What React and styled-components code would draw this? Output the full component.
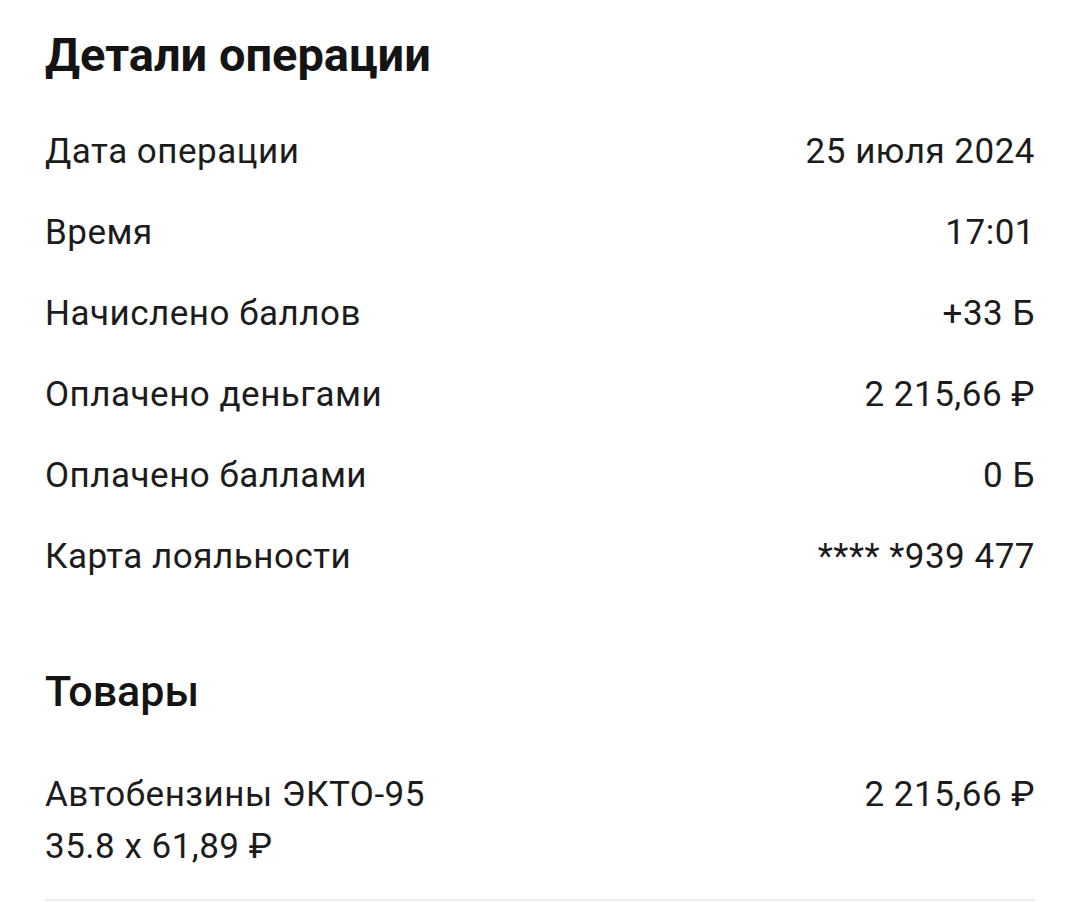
import styled, { createGlobalStyle } from "styled-components";

const GlobalStyle = createGlobalStyle`
  body {
    margin: 0;
    background: #ffffff;
    font-family: Roboto, "Noto Sans", sans-serif;
    color: #1c1c1c;
  }
`;

const details = [
  { label: "Дата операции", value: "25 июля 2024" },
  { label: "Время", value: "17:01" },
  { label: "Начислено баллов", value: "+33 Б" },
  { label: "Оплачено деньгами", value: "2 215,66 ₽" },
  { label: "Оплачено баллами", value: "0 Б" },
  { label: "Карта лояльности", value: "**** *939 477" },
];

function App() {
  return (
    <Page>
      <GlobalStyle />
      <Title>Детали операции</Title>
      <List>
        {details.map((d) => (
          <Row key={d.label}>
            <Label>{d.label}</Label>
            <Value>{d.value}</Value>
          </Row>
        ))}
      </List>
      <SectionTitle>Товары</SectionTitle>
      <Product>
        <ProductInfo>
          <Label>Автобензины ЭКТО-95</Label>
          <Label>35.8 x 61,89 ₽</Label>
        </ProductInfo>
        <Value>2 215,66 ₽</Value>
      </Product>
    </Page>
  );
}

const Page = styled.div`
  padding: 31px 45px 0;
  width: 990px;
`;

const Title = styled.h1`
  margin: 0;
  font-size: 47px;
  line-height: 48px;
  font-weight: 700;
  color: #141414;
`;

const List = styled.div`
  display: flex;
  flex-direction: column;
  margin-top: 32px;
`;

const Row = styled.div`
  display: flex;
  justify-content: space-between;
  align-items: center;
  height: 81px;
`;

const Label = styled.span`
  font-size: 35px;
  line-height: 52px;
  letter-spacing: 0.5px;
`;

const Value = styled(Label)`
  text-align: right;
`;

const SectionTitle = styled.h2`
  margin: 70px 0 0;
  font-size: 43px;
  line-height: 48px;
  font-weight: 500;
  color: #141414;
`;

const Product = styled.div`
  display: flex;
  justify-content: space-between;
  align-items: flex-start;
  margin-top: 54px;
  padding-bottom: 26px;
  border-bottom: 2px solid #eeeeee;
`;

const ProductInfo = styled.div`
  display: flex;
  flex-direction: column;
`;

export default App;
